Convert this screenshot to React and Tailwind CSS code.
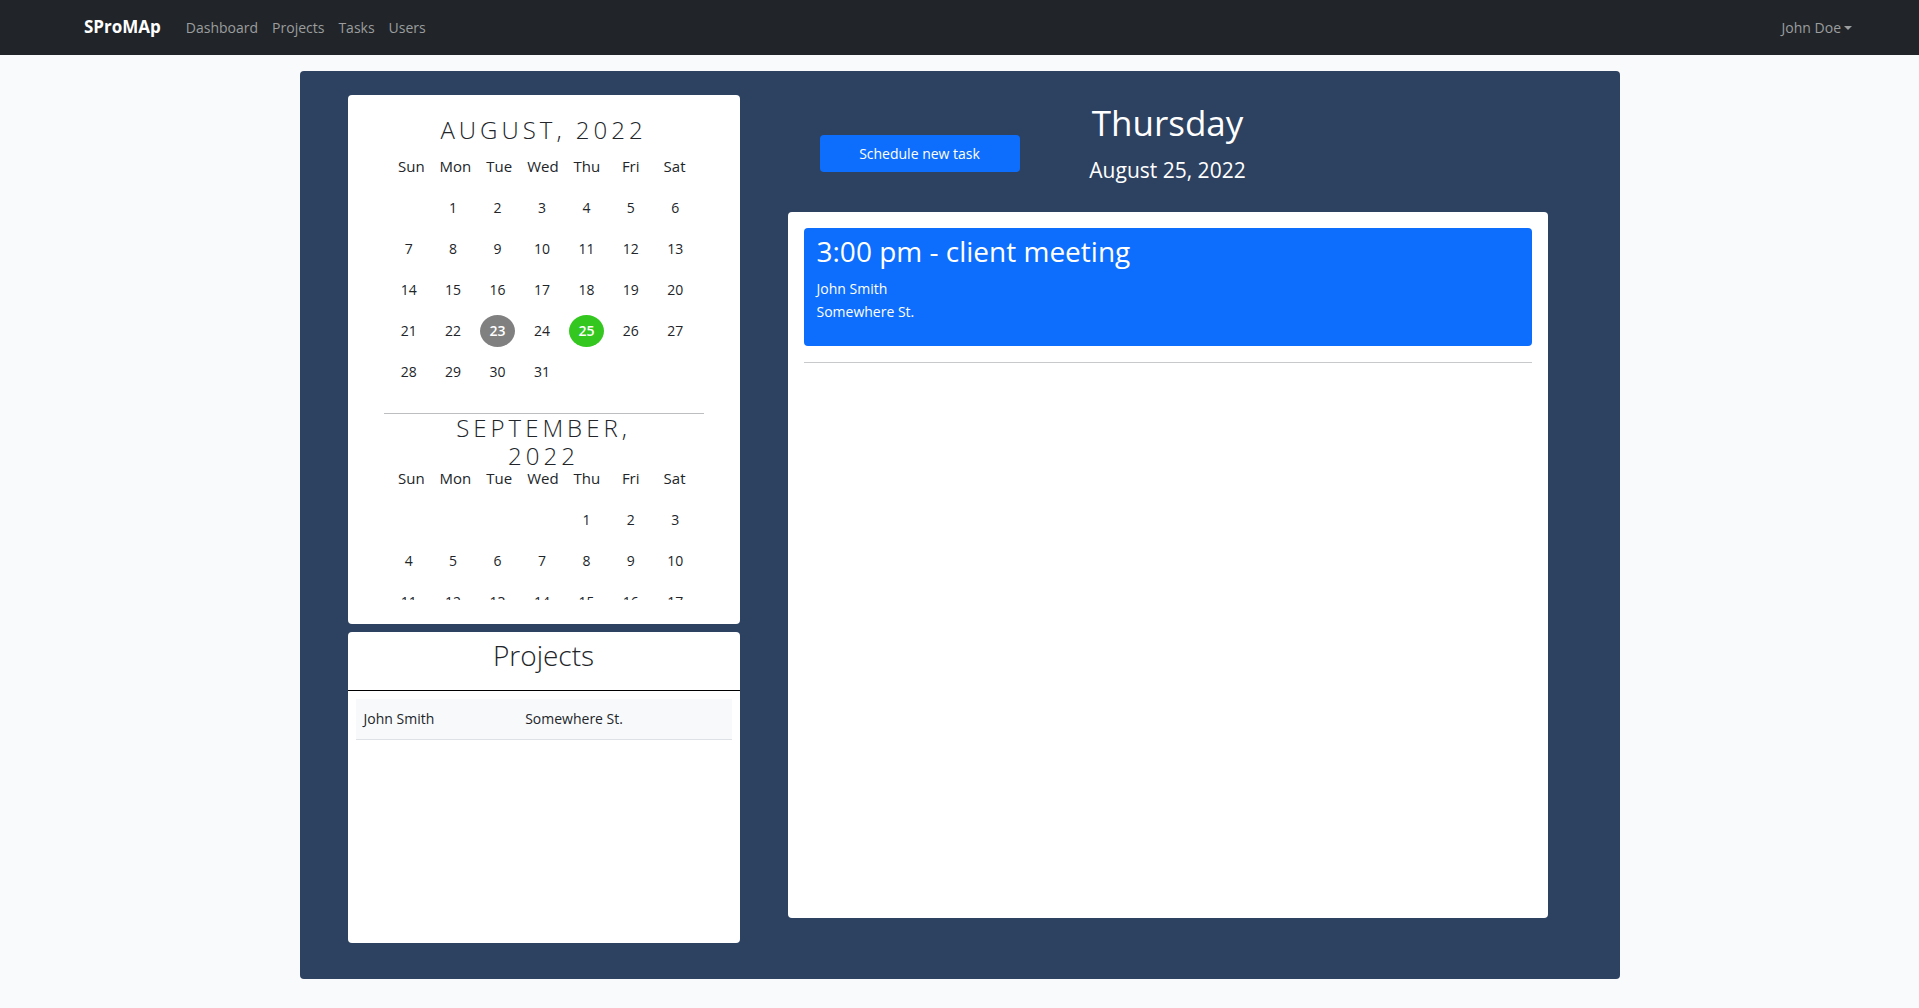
const NAV_LINKS = ["Dashboard", "Projects", "Tasks", "Users"];
const WEEKDAYS = ["Sun", "Mon", "Tue", "Wed", "Thu", "Fri", "Sat"];
const MONTHS = [
  { title: "August, 2022", offset: 1, days: 31, today: 23, selected: 25 },
  { title: "September, 2022", offset: 4, days: 30 },
];

function Navbar() {
  return (
    <nav className="flex h-[55px] items-center bg-[#212529] pr-[67px] pl-[84px] text-sm text-[#9b9d9e]">
      <a href="#home" className="mr-[18px] text-[17px] font-bold text-white">
        SProMAp
      </a>
      <ul className="flex">
        {NAV_LINKS.map((label) => (
          <li key={label}>
            <a href={"#" + label.toLowerCase()} className="block px-[7px] py-1">
              {label}
            </a>
          </li>
        ))}
      </ul>
      <button type="button" className="ml-auto flex items-center gap-[3px]">
        John Doe
        <span className="border-x-[4px] border-t-[4px] border-x-transparent border-t-[#9b9d9e]" />
      </button>
    </nav>
  );
}

function dayClass(month, day) {
  const base = "h-8 w-[35px] rounded-[50%] text-sm ";
  if (day === month.today) return base + "bg-[#808080] font-semibold text-white";
  if (day === month.selected) return base + "bg-[#33c71f] font-semibold text-white";
  return base;
}

function Month({ month }) {
  const days = Array.from({ length: month.days }, (_, i) => i + 1);
  return (
    <section>
      <h2 className="mx-auto min-h-[42px] w-[220px] text-center text-2xl leading-7 font-light tracking-[4px] uppercase">
        {month.title}
      </h2>
      <div className="grid grid-cols-7 pr-[7px] pl-[6px] text-center text-[15px] leading-4">
        {WEEKDAYS.map((name) => (
          <span key={name}>{name}</span>
        ))}
      </div>
      <div className="mt-[13px] grid auto-rows-[41px] grid-cols-7 place-items-center pr-[6px] pl-[3px]">
        {Array.from({ length: month.offset }, (_, i) => (
          <span key={"blank" + i} />
        ))}
        {days.map((day) => (
          <button type="button" key={day} className={dayClass(month, day)}>
            {day}
          </button>
        ))}
      </div>
    </section>
  );
}

function Calendar() {
  return (
    <div className="rounded bg-white px-9 pt-[21px] pb-6">
      <div className="h-[484px] overflow-hidden">
        <Month month={MONTHS[0]} />
        <hr className="mt-[21px] border-[#bcbebf]" />
        <Month month={MONTHS[1]} />
      </div>
    </div>
  );
}

function Projects() {
  return (
    <section className="min-h-[311px] rounded bg-white">
      <h2 className="border-b border-black pt-[5px] pb-[17px] text-center text-[28px] leading-9 font-light">
        Projects
      </h2>
      <div className="p-2">
        <table className="w-full table-fixed text-left text-sm">
          <tbody>
            <tr className="border-b border-[#dee2e6] bg-[#f8f9fb]">
              <td className="w-[43%] px-2 py-[10px]">John Smith</td>
              <td className="px-2 py-[10px]">Somewhere St.</td>
            </tr>
          </tbody>
        </table>
      </div>
    </section>
  );
}

function Agenda() {
  return (
    <section className="flex flex-col">
      <header className="grid h-[117px] grid-cols-3 text-white">
        <div className="flex items-center pl-8">
          <button type="button" className="h-[37px] w-[200px] rounded bg-[#0d6efd] text-sm">
            Schedule new task
          </button>
        </div>
        <div className="pt-[5px] text-center whitespace-nowrap">
          <h1 className="text-[35px] leading-[46px]">Thursday</h1>
          <p className="mt-2 text-[21px] leading-8">August 25, 2022</p>
        </div>
      </header>
      <div className="min-h-[706px] rounded bg-white p-4">
        <article className="h-[118px] rounded bg-[#0d6efd] px-[13px] pt-1 text-sm leading-[23px] text-white">
          <h2 className="mb-[7px] text-[28px] leading-[38px]">3:00 pm - client meeting</h2>
          <p>John Smith</p>
          <p>Somewhere St.</p>
        </article>
        <hr className="mt-4 border-[#c8c9ca]" />
      </div>
    </section>
  );
}

export default function App() {
  return (
    <div className="min-h-screen bg-[#f8fafc] font-['Open_Sans',sans-serif] text-[#212529]">
      <Navbar />
      <main className="mx-auto mt-4 grid max-w-[1320px] grid-cols-[392fr_760fr] gap-12 rounded bg-[#2d4161] pt-6 pr-[72px] pb-9 pl-12">
        <div className="flex flex-col gap-2">
          <Calendar />
          <Projects />
        </div>
        <Agenda />
      </main>
    </div>
  );
}
